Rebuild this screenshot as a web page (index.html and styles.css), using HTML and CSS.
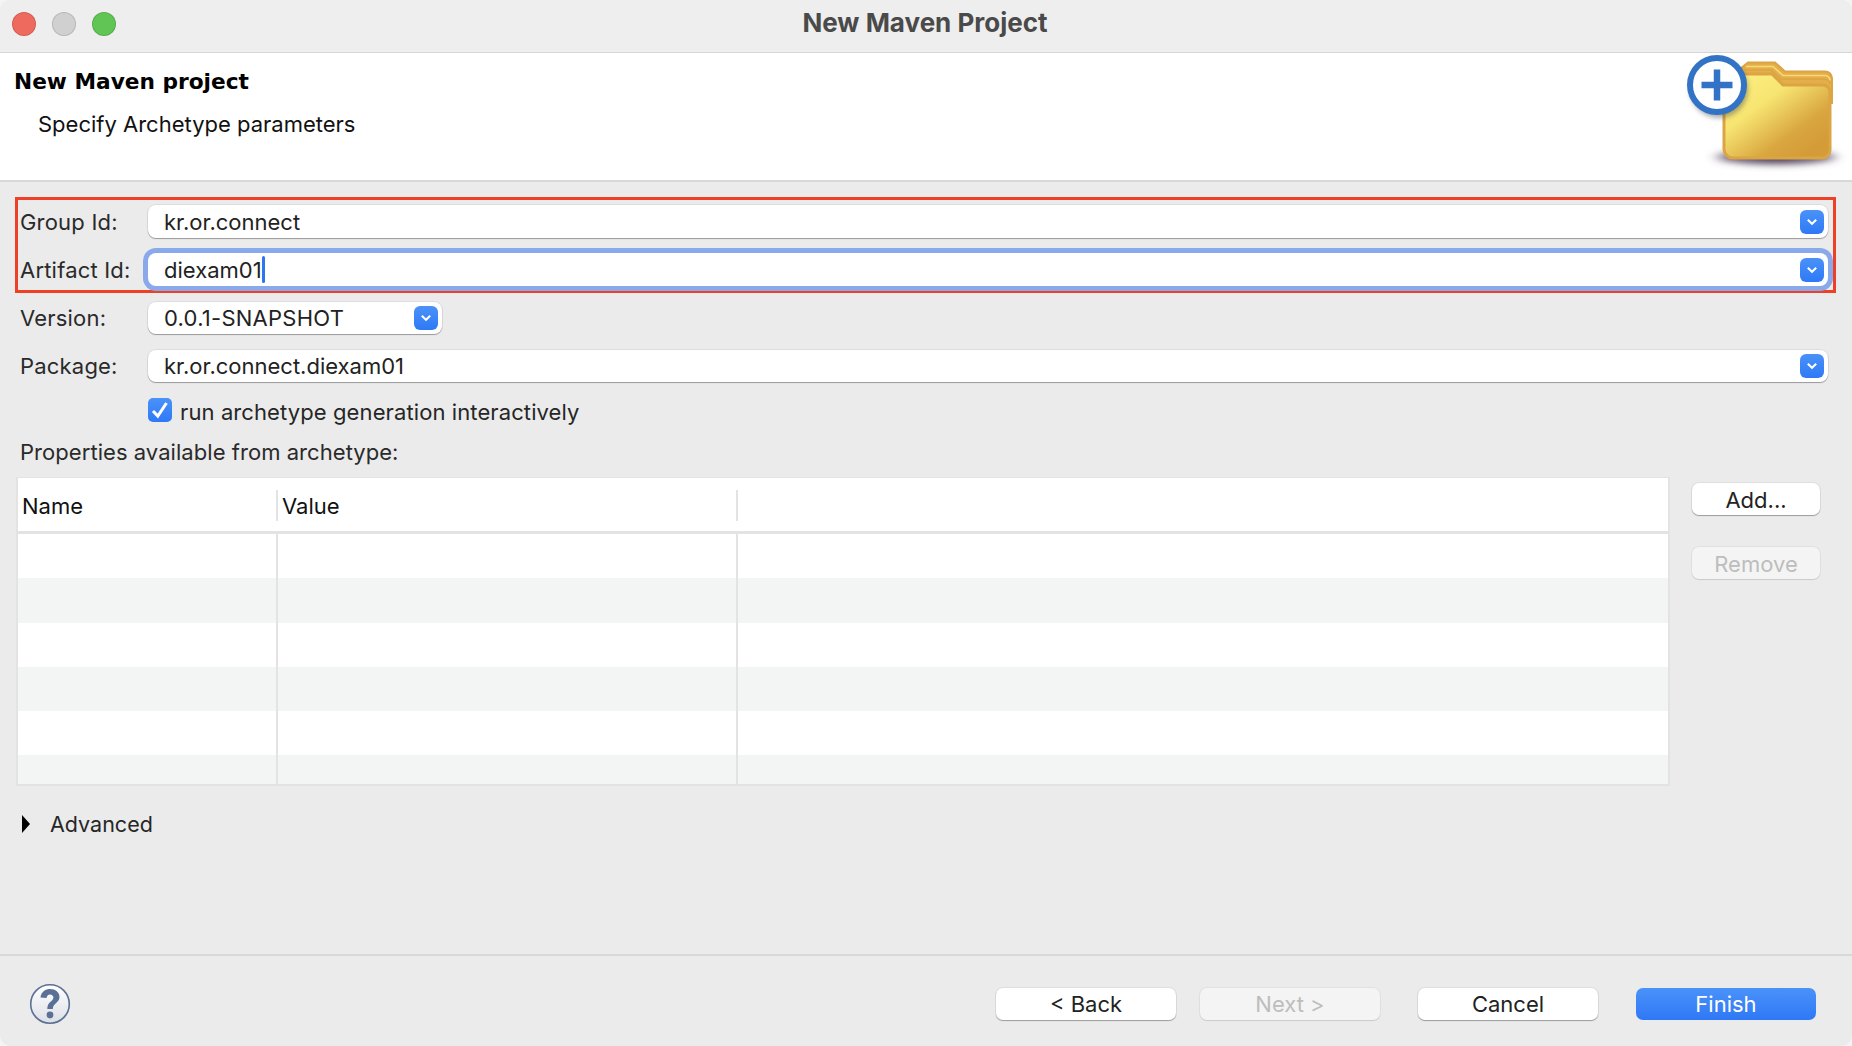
FILE: index.html
```html
<!DOCTYPE html>
<html lang="en">
<head>
<meta charset="utf-8">
<title>New Maven Project</title>
<link rel="stylesheet" href="styles.css">
</head>
<body>
<div class="window">
  <header class="titlebar">
    <div class="lights">
      <span class="light light-close"></span>
      <span class="light light-min"></span>
      <span class="light light-max"></span>
    </div>
    <div class="window-title">New Maven Project</div>
  </header>

  <section class="banner">
    <div class="banner-text">
      <h1 class="banner-title">New Maven project</h1>
      <p class="banner-sub">Specify Archetype parameters</p>
    </div>
    <svg class="banner-icon" width="172" height="125" viewBox="0 0 172 125" aria-hidden="true">
      <defs>
        <linearGradient id="fold" x1="0.12" y1="0.15" x2="0.82" y2="0.9">
          <stop offset="0" stop-color="#fbec7c"/>
          <stop offset="0.3" stop-color="#f7e572"/>
          <stop offset="0.75" stop-color="#d9a640"/>
          <stop offset="1" stop-color="#d49c38"/>
        </linearGradient>
        <radialGradient id="shad" cx="0.5" cy="0.5" r="0.5">
          <stop offset="0" stop-color="#3a2a40" stop-opacity="0.95"/>
          <stop offset="0.75" stop-color="#4a3a50" stop-opacity="0.75"/>
          <stop offset="1" stop-color="#6a5a70" stop-opacity="0"/>
        </radialGradient>
        <filter id="blur" x="-20%" y="-60%" width="140%" height="220%"><feGaussianBlur stdDeviation="3"/></filter>
        <filter id="blur2" x="-30%" y="-30%" width="160%" height="160%"><feGaussianBlur stdDeviation="2.5"/></filter>
      </defs>
      <ellipse cx="96" cy="104" rx="68" ry="9" fill="url(#shad)" filter="url(#blur)"/>
      <path d="M68 9.5 H95 L105 18.5 H145 a7 7 0 0 1 7 7 V50 H60 V16 z" fill="#e4ae48" stroke="#dba445" stroke-width="2"/>
      <path d="M66 13.5 H93 L103 22.5 H145 a5 5 0 0 1 5 5" fill="none" stroke="#f6d979" stroke-width="1.6"/>
      <path d="M64 17 H91 L101 26 H145 a5 5 0 0 1 5 5" fill="none" stroke="#dba445" stroke-width="1.6"/>
      <path d="M52 21 H92 L103 32 H143 a7 7 0 0 1 7 7 V97 a8 8 0 0 1-8 8 H53 a9 9 0 0 1-9-9 V30 a9 9 0 0 1 8-9z" fill="url(#fold)" stroke="#dba445" stroke-width="3"/>
      <circle cx="39" cy="36" r="29" fill="#444" opacity="0.45" filter="url(#blur2)"/>
      <circle cx="37" cy="32" r="27" fill="#fff" stroke="#3273c5" stroke-width="6"/>
      <path d="M37 16.5 V47.5 M21.5 32 H52.5" stroke="#3273c5" stroke-width="6.5" fill="none"/>
    </svg>
  </section>

  <main class="content">
    <div class="highlight">
      <div class="field">
        <label class="field-label">Group Id:</label>
        <div class="combo combo-wide"><span class="combo-text">kr.or.connect</span>
          <span class="combo-arrow"><svg width="12" height="8" viewBox="0 0 12 8"><path d="M1.8 1.8 L6 5.8 L10.2 1.8" fill="none" stroke="#fff" stroke-width="2"/></svg></span></div>
      </div>
      <div class="field field-tight">
        <label class="field-label">Artifact Id:</label>
        <div class="combo combo-wide combo-focus"><span class="combo-text">diexam01<span class="caret"></span></span>
          <span class="combo-arrow"><svg width="12" height="8" viewBox="0 0 12 8"><path d="M1.8 1.8 L6 5.8 L10.2 1.8" fill="none" stroke="#fff" stroke-width="2"/></svg></span></div>
      </div>
    </div>
    <div class="field field-after">
      <label class="field-label">Version:</label>
      <div class="combo combo-short"><span class="combo-text combo-text-version">0.0.1-SNAPSHOT</span>
        <span class="combo-arrow"><svg width="12" height="8" viewBox="0 0 12 8"><path d="M1.8 1.8 L6 5.8 L10.2 1.8" fill="none" stroke="#fff" stroke-width="2"/></svg></span></div>
    </div>
    <div class="field field-next">
      <label class="field-label">Package:</label>
      <div class="combo combo-pkg"><span class="combo-text">kr.or.connect.diexam01</span>
        <span class="combo-arrow"><svg width="12" height="8" viewBox="0 0 12 8"><path d="M1.8 1.8 L6 5.8 L10.2 1.8" fill="none" stroke="#fff" stroke-width="2"/></svg></span></div>
    </div>
    <div class="check-row">
      <span class="checkbox"><svg width="18" height="18" viewBox="0 0 18 18"><path d="M2 10 L6.8 15 L15.5 2" fill="none" stroke="#fff" stroke-width="3"/></svg></span>
      <span class="check-label">run archetype generation interactively</span>
    </div>
    <div class="props-label">Properties available from archetype:</div>

    <div class="props">
      <div class="table">
        <div class="thead">
          <div class="th th-name">Name</div>
          <div class="th th-value">Value</div>
          <div class="th th-rest"></div>
        </div>
        <div class="tbody">
          <div class="tr"><div class="td td-name"></div><div class="td td-value"></div><div class="td"></div></div>
          <div class="tr tr-alt"><div class="td td-name"></div><div class="td td-value"></div><div class="td"></div></div>
          <div class="tr"><div class="td td-name"></div><div class="td td-value"></div><div class="td"></div></div>
          <div class="tr tr-alt"><div class="td td-name"></div><div class="td td-value"></div><div class="td"></div></div>
          <div class="tr"><div class="td td-name"></div><div class="td td-value"></div><div class="td"></div></div>
          <div class="tr tr-alt tr-last"><div class="td td-name"></div><div class="td td-value"></div><div class="td"></div></div>
        </div>
      </div>
      <div class="side-buttons">
        <button class="btn btn-side">Add...</button>
        <button class="btn btn-side btn-disabled" disabled>Remove</button>
      </div>
    </div>

    <div class="advanced">
      <span class="disclosure"></span>
      <span class="advanced-label">Advanced</span>
    </div>
  </main>

  <footer class="footer">
    <svg class="help" width="42" height="42" viewBox="0 0 42 42" aria-hidden="true">
      <defs>
        <linearGradient id="helpbg" x1="0" y1="0" x2="0" y2="1">
          <stop offset="0" stop-color="#ffffff"/>
          <stop offset="1" stop-color="#dcdfe6"/>
        </linearGradient>
      </defs>
      <circle cx="21" cy="21" r="19.3" fill="url(#helpbg)" stroke="#5a7094" stroke-width="1.6"/>
      <path d="M11.5 14.5 C12 8.5 17 6 21 6 C26.5 6 30.5 9.5 30.5 14 C30.5 20 23.8 20 23.8 26 H18.3 C18.3 18.5 24.4 18.5 24.4 14.5 C24.4 12.7 23 11.4 21 11.4 C19 11.4 17.8 13 17.5 15 Z" fill="#5a7094"/>
      <circle cx="21" cy="32" r="3.4" fill="#5a7094"/>
    </svg>
    <div class="footer-buttons">
      <button class="btn btn-foot">&lt; Back</button>
      <button class="btn btn-foot btn-disabled btn-next" disabled>Next &gt;</button>
      <button class="btn btn-foot btn-cancel">Cancel</button>
      <button class="btn btn-foot btn-primary">Finish</button>
    </div>
  </footer>
</div>
</body>
</html>
```

FILE: styles.css
```css
* { box-sizing: border-box; }
html, body { margin: 0; padding: 0; }
body {
  width: 1852px;
  height: 1046px;
  overflow: hidden;
  background: #f4f4f4;
  font-family: "Inter", "Liberation Sans", sans-serif;
  font-size: 22px;
  color: #262626;
}
.window { width: 1852px; height: 1046px; display: flex; flex-direction: column; background: #ebebeb; border-radius: 11px; overflow: hidden; }

.titlebar {
  height: 53px;
  flex: none;
  position: relative;
  display: flex;
  align-items: center;
  justify-content: center;
  background: #eeeeee;
  border-bottom: 1px solid #d6d6d6;
}
.lights { position: absolute; left: 12px; top: 12px; display: flex; gap: 16px; }
.light { width: 24px; height: 24px; border-radius: 50%; border: 1px solid rgba(0,0,0,.12); }
.light-close { background: #ee6a5f; }
.light-min { background: #d0d0d0; }
.light-max { background: #60c554; }
.window-title { font-weight: 700; font-size: 26px; line-height: 46px; height: 52px; color: #4a4a4a; margin-left: -2px; }

.banner {
  height: 129px;
  flex: none;
  display: flex;
  justify-content: space-between;
  background: #fff;
  border-bottom: 2px solid #d8d8d8;
}
.banner-text { padding: 14px 0 0 14px; }
.banner-title { margin: 0; font-family: "DejaVu Sans", sans-serif; font-size: 21.7px; font-weight: 700; color: #000; line-height: 30px; }
.banner-sub { margin: 13px 0 0 24px; font-size: 22px; color: #111; line-height: 28px; }
.banner-icon { flex: none; margin-top: 0; }

.content { flex: 1; padding: 15px 0 0 15px; min-height: 0; }
.highlight { width: 1821px; height: 96px; border: 3px solid #ee4026; padding: 5px 5px 0 2px; display: flex; flex-direction: column; gap: 15px; }
.field { display: flex; align-items: center; height: 33px; }
.field-label { width: 128px; flex: none; color: #2a2a2a; letter-spacing: .2px; }
.field-after { margin: 9px 0 0 5px; height: 32px; }
.field-next { margin: 16px 0 0 5px; height: 32px; }
.combo {
  height: 100%;
  display: flex;
  align-items: center;
  justify-content: space-between;
  background: #fff;
  border-radius: 8px;
  padding: 0 4px 0 16px;
  box-shadow: 0 0 0 1px rgba(0,0,0,.06), 0 1px 1px rgba(0,0,0,.3);
  color: #222;
}
.combo-wide { width: 1680px; }
.combo-pkg { width: 1680px; }
.combo-short { width: 294px; }
.combo-focus { box-shadow: 0 0 0 5px #8aa9ea; }
.combo-text { display: flex; align-items: center; }
.combo-text-version { letter-spacing: .25px; }
.caret { width: 3px; height: 27px; background: #2f75f0; border-radius: 2px; margin-left: 0; }
.combo-arrow {
  width: 24px; height: 24px; border-radius: 6px;
  background: linear-gradient(#4a92f9, #2e79f7);
  display: flex; align-items: center; justify-content: center;
}
.check-row { display: flex; align-items: center; height: 24px; margin: 16px 0 0 133px; }
.checkbox {
  width: 24px; height: 24px; border-radius: 5px;
  background: linear-gradient(#4a92f9, #2e79f7);
  display: flex; align-items: center; justify-content: center;
}
.check-label { margin-left: 8px; color: #262626; padding-top: 3px; letter-spacing: .1px; }
.props-label { margin: 17px 0 0 5px; height: 26px; line-height: 26px; color: #2a2a2a; letter-spacing: .05px; }

.props { display: flex; margin-top: 12px; margin-left: 1px; }
.table { width: 1654px; height: 309px; flex: none; background: #fff; border: 2px solid #e3e3e3; border-top-width: 1px; display: flex; flex-direction: column; overflow: hidden; }
.thead { display: flex; height: 56px; flex: none; border-bottom: 3px solid #e3e3e3; }
.th { position: relative; padding: 2px 0 0 4px; display: flex; align-items: center; color: #111; }
.th-name { width: 260px; }
.th-value { width: 460px; }
.th-rest { flex: 1; }
.th-name::after, .th-value::after { content: ""; position: absolute; right: 0; top: 12px; height: 31px; width: 2px; background: #e3e3e3; }
.tbody { flex: 1; display: flex; flex-direction: column; }
.tr { display: flex; height: 44.3px; flex: none; background: #fff; }
.tr-alt { background: #f3f5f4; }
.td { flex: 1; }
.td-name { width: 260px; flex: none; border-right: 2px solid #e3e3e3; }
.td-value { width: 460px; flex: none; border-right: 2px solid #e3e3e3; }

.side-buttons { display: flex; flex-direction: column; gap: 32px; margin: 6px 0 0 22px; }
.btn {
  font-family: inherit; font-size: 22px;
  border: 0; border-radius: 7px; background: #fff; color: #222; padding: 0;
  box-shadow: 0 0 0 1px rgba(0,0,0,.05), 0 1px 1px rgba(0,0,0,.3);
}
.btn-side { width: 128px; height: 32px; padding-top: 2px; }
.btn-disabled { background: #f4f4f4; color: #bdbdbd; box-shadow: 0 0 0 1px rgba(0,0,0,.04), 0 1px 1px rgba(0,0,0,.1); }

.advanced { display: flex; align-items: center; margin: 24px 0 0 7px; height: 28px; }
.disclosure { width: 0; height: 0; border-left: 8px solid #000; border-top: 9px solid transparent; border-bottom: 9px solid transparent; }
.advanced-label { margin-left: 20px; color: #262626; font-size: 21.5px; }

.footer {
  height: 92px; flex: none;
  border-top: 2px solid #d8d8d8;
  display: flex; align-items: center; justify-content: space-between;
  padding: 5px 36px 0 29px;
}
.footer-buttons { display: flex; gap: 24px; }
.btn-foot { width: 180px; height: 32px; }
.btn-cancel { margin-left: 14px; }
.btn-primary { margin-left: 14px; background: linear-gradient(#4a92f9, #2f78f6); color: #fff; box-shadow: none; }
```
